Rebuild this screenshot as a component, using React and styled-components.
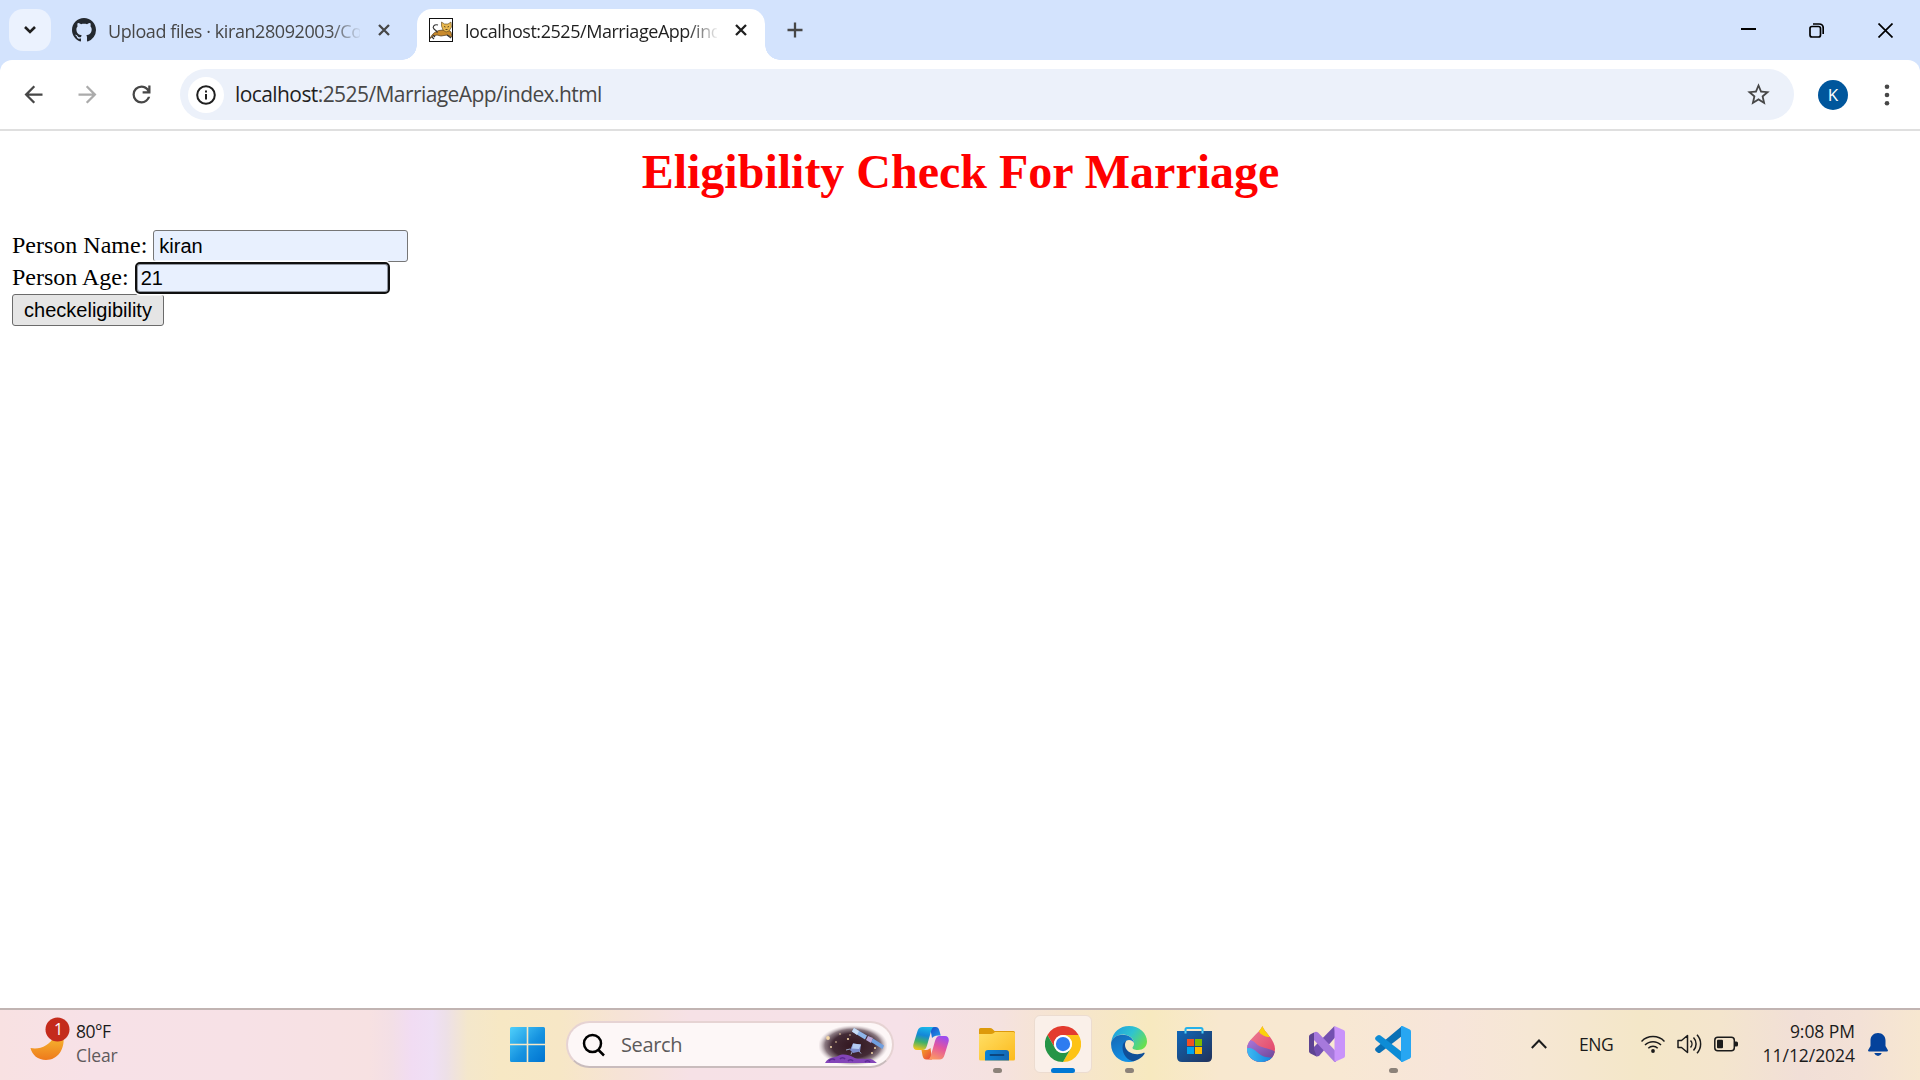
import React from "react";
import styled, { createGlobalStyle, css } from "styled-components";

const ui = '"Open Sans", "Noto Sans", sans-serif';
const serif = '"Liberation Serif", "Times New Roman", serif';
const sans = '"Liberation Sans", Arial, sans-serif';

const GlobalStyle = createGlobalStyle`
  *, *::before, *::after { box-sizing: border-box; }
  html, body { margin: 0; padding: 0; background: #fff; overflow: hidden; }
  svg { display: block; flex: none; }
  button, input { margin: 0; }
`;

const Desktop = styled.div`
  width: 1920px;
  height: 1080px;
  display: flex;
  flex-direction: column;
  background: #fff;
  overflow: hidden;
`;

/* ---------- browser frame ---------- */

const TabStrip = styled.div`
  height: 60px;
  flex: none;
  display: flex;
  align-items: flex-start;
  padding: 9px 0 0 9px;
  background: #d3e3fd;
`;

const IconButton = styled.button`
  width: ${(p) => p.$w || 42}px;
  height: ${(p) => p.$h || 42}px;
  flex: none;
  display: flex;
  align-items: center;
  justify-content: center;
  padding: 0;
  border: 0;
  border-radius: ${(p) => p.$radius || 0}px;
  background: ${(p) => p.$bg || "transparent"};
  color: ${(p) => p.$color || "#1f1f1f"};
`;

const Tab = styled.div`
  position: relative;
  width: 348px;
  height: 51px;
  display: flex;
  align-items: flex-start;
  padding: 9px 15px 0 12px;
  margin-left: ${(p) => p.$ml || 0}px;
  border-radius: 15px 15px 0 0;
  color: ${(p) => (p.$active ? "#1f1f1f" : "#474747")};
  ${(p) =>
    p.$active &&
    css`
      background: #fff;
      &::before,
      &::after {
        content: "";
        position: absolute;
        bottom: 0;
        width: 15px;
        height: 15px;
      }
      &::before {
        left: -15px;
        background: radial-gradient(circle at 0 0, transparent 14.5px, #fff 15px);
      }
      &::after {
        right: -15px;
        background: radial-gradient(circle at 100% 0, transparent 14.5px, #fff 15px);
      }
    `}
`;

const TabTitle = styled.span`
  width: 252px;
  height: 30px;
  margin: -2px 0 0 12px;
  overflow: hidden;
  white-space: nowrap;
  font: 400 18px/30px ${ui};
  letter-spacing: ${(p) => p.$ls}px;
  mask-image: linear-gradient(90deg, #000 222px, transparent 254px);
`;

const TabClose = styled.span`
  margin: 6px 0 0 18px;
`;

const WindowControls = styled.div`
  display: flex;
  margin: -9px 0 0 auto;
`;

const ToolbarBack = styled.div`
  flex: none;
  background: #d3e3fd;
`;

const Toolbar = styled.div`
  height: 71px;
  display: flex;
  align-items: center;
  padding: 0 12px;
  border-bottom: 2px solid #dfdfdf;
  border-radius: 12px 12px 0 0;
  background: #fff;
`;

const Omnibox = styled.div`
  width: 1614px;
  height: 51px;
  flex: none;
  display: flex;
  align-items: center;
  margin-left: 18px;
  padding: 0 22px 0 8px;
  border-radius: 26px;
  background: #ecf1fa;
`;

const SiteInfo = styled.span`
  width: 36px;
  height: 36px;
  display: flex;
  align-items: center;
  justify-content: center;
  border-radius: 50%;
  background: #fff;
`;

const Url = styled.span`
  flex: 1;
  margin: -2px 0 0 11px;
  color: #474747;
  font: 400 21px/30px ${ui};
  letter-spacing: -0.58px;
  white-space: nowrap;
`;

const Host = styled.span`
  color: #1f1f1f;
`;

const Avatar = styled.span`
  width: 30px;
  height: 30px;
  display: flex;
  align-items: center;
  justify-content: center;
  margin: 1px 24px 0;
  border-radius: 50%;
  background: #00569c;
  color: #fff;
  font: 400 17px/30px ${ui};
`;

/* ---------- page ---------- */

const Page = styled.main`
  flex: 1;
  padding: 13px 11px 0 12px;
  background: #fff;
`;

const Title = styled.h1`
  margin: 0 0 31px;
  color: #f00;
  text-align: center;
  font: 700 48px/55px ${serif};
`;

const Field = styled.label`
  height: 32px;
  display: flex;
  align-items: flex-start;
  gap: 6px;
  color: #000;
  font: 400 24px/30px ${serif};
`;

const TextInput = styled.input`
  width: 255px;
  height: 32px;
  padding: 1px ${(p) => (p.$focused ? 4 : 5)}px;
  border: ${(p) => (p.$focused ? "2px solid #101010" : "1px solid #767676")};
  border-radius: ${(p) => (p.$focused ? 5 : 3)}px;
  outline: none;
  background: #e8f0fe;
  box-shadow: ${(p) => (p.$focused ? "inset 0 0 0 1px #9096a0, 0 0 0 1.5px #fff" : "none")};
  color: #000;
  font: 400 20px/26px ${sans};
`;

const SubmitButton = styled.button`
  display: block;
  width: 152px;
  height: 32px;
  padding: 0;
  border: 1px solid #6b6b6b;
  border-radius: 3px;
  background: #e5e5e5;
  color: #000;
  font: 400 20px/28px ${sans};
`;

/* ---------- taskbar ---------- */

const Taskbar = styled.footer`
  height: 72px;
  flex: none;
  display: flex;
  border-top: 2px solid #c1b4b2;
  background: linear-gradient(
    90deg,
    #f8e1e2 0, #f7e1e7 90px, #f7e1e6 240px, #f7e1e2 370px, #f3dfe6 392px,
    #f1dcf3 412px, #efdff5 432px, #ede0e8 446px, #f4e7cb 468px, #f7e8c4 500px,
    #f7e7c6 560px, #f6e3d6 620px, #f6e1e6 690px, #f6e1e8 900px, #f5e2df 1000px,
    #f6e5cd 1070px, #f7e9bf 1150px, #f8e8cf 1220px, #f8e8d3 1340px,
    #f7e5da 1450px, #f6e7d4 1530px, #f4e7c8 1640px, #f4e5cd 1720px,
    #f1dfd7 1800px, #f3e1d6 1860px, #f7e7d0 1920px
  );
`;

const Weather = styled.div`
  width: 510px;
  display: flex;
  padding: 6px 0 0 30px;
`;

const Lines = styled.div`
  display: flex;
  flex-direction: column;
  align-items: ${(p) => p.$align || "flex-start"};
  margin: ${(p) => p.$margin || "0"};
  color: #1b1b1b;
  font: 400 17.5px/24px ${ui};
  letter-spacing: ${(p) => p.$ls}px;
  white-space: nowrap;
`;

const Muted = styled.span`
  color: #5f5a5c;
  letter-spacing: -0.1px;
`;

const StartButton = styled.div`
  margin: 17px 21px 0 0;
`;

const SearchBox = styled.div`
  width: 328px;
  height: 47px;
  flex: none;
  display: flex;
  align-items: center;
  margin-top: 11px;
  padding: 0 5px 0 14px;
  border: 2px solid #e6d3d3;
  border-bottom-color: #c9bcbd;
  border-radius: 24px;
  background: #fdf7f7;
`;

const SearchText = styled.span`
  flex: 1;
  margin-left: 15px;
  color: #5c5a5a;
  font: 400 20px/28px ${ui};
  letter-spacing: -0.35px;
`;

const Apps = styled.div`
  display: flex;
  gap: 8px;
  margin: 5px 0 0 8px;
`;

const AppTile = styled.div`
  width: 58px;
  height: 58px;
  display: flex;
  flex-direction: column;
  align-items: center;
  padding-top: ${(p) => (p.$active ? 10 : 11)}px;
  border: ${(p) => (p.$active ? "1px solid #ecdcd0" : "0")};
  border-radius: 6px;
  background: ${(p) => (p.$active ? "#faf0e9" : "transparent")};
`;

const Running = styled.span`
  width: ${(p) => (p.$active ? 24 : 9)}px;
  height: 5px;
  flex: none;
  margin-top: 6px;
  border-radius: 3px;
  background: ${(p) => (p.$active ? "#0078d4" : "#8c8279")};
`;

const Tray = styled.div`
  display: flex;
  align-items: center;
  margin-left: auto;
  padding: 0 32px 2px 0;
  color: #1b1b1b;
`;

const Language = styled.span`
  width: 62px;
  margin-left: 32px;
  font: 400 17.5px/24px ${ui};
  letter-spacing: -0.5px;
`;

const TrayGroup = styled.div`
  width: 97px;
  display: flex;
  align-items: center;
  justify-content: space-between;
`;

const Clock = styled.div`
  width: 117px;
  display: flex;
  justify-content: flex-end;
  margin: -2px 13px 0 0;
`;

/* ---------- glyphs ---------- */

const Stroke = ({ w, h, d, sw = 2, cap = "butt", join = "miter" }) => (
  <svg width={w} height={h} viewBox={`0 0 ${w} ${h}`} fill="none" stroke="currentColor" strokeWidth={sw} strokeLinecap={cap} strokeLinejoin={join}>
    <path d={d} />
  </svg>
);

const Filled = ({ size, d, box = "0 0 24 24", color = "currentColor" }) => (
  <svg width={size} height={size} viewBox={box} fill={color}>
    <path d={d} />
  </svg>
);

const githubPath =
  "M8 0C3.58 0 0 3.58 0 8c0 3.54 2.29 6.53 5.47 7.59.4.07.55-.17.55-.38 0-.19-.01-.82-.01-1.49-2.01.37-2.53-.49-2.69-.94-.09-.23-.48-.94-.82-1.13-.28-.15-.68-.52-.01-.53.63-.01 1.08.58 1.23.82.72 1.21 1.87.87 2.33.66.07-.52.28-.87.51-1.07-1.78-.2-3.64-.89-3.64-3.95 0-.87.31-1.59.82-2.15-.08-.2-.36-1.02.08-2.12 0 0 .67-.21 2.2.82.64-.18 1.32-.27 2-.27.68 0 1.36.09 2 .27 1.53-1.04 2.2-.82 2.2-.82.44 1.1.16 1.92.08 2.12.51.56.82 1.27.82 2.15 0 3.07-1.87 3.75-3.65 3.95.29.25.54.73.54 1.48 0 1.07-.01 1.93-.01 2.2 0 .21.15.46.55.38A8.013 8.013 0 0016 8c0-4.42-3.58-8-8-8z";
const backPath = "M20 11H7.83l5.59-5.59L12 4l-8 8 8 8 1.41-1.41L7.83 13H20v-2z";
const forwardPath = "M4 11h12.17l-5.59-5.59L12 4l8 8-8 8-1.41-1.41L16.17 13H4v-2z";
const reloadPath =
  "M480-160q-134 0-227-93t-93-227q0-134 93-227t227-93q69 0 132 28.5T720-690v-110h80v280H520v-80h168q-32-56-87.5-88T480-720q-100 0-170 70t-70 170q0 100 70 170t170 70q77 0 139-44t87-116h84q-28 106-114 173t-196 67Z";
const starPath =
  "M22 9.24l-7.19-.62L12 2 9.19 8.63 2 9.24l5.46 4.73L5.82 21 12 17.27 18.18 21l-1.63-7.03L22 9.24zM12 15.4l-3.76 2.27 1-4.28-3.32-2.88 4.38-.38L12 6.1l1.71 4.04 4.38.38-3.32 2.88 1 4.28L12 15.4z";

const TomcatIcon = () => (
  <svg width="24" height="24" viewBox="0 0 24 24">
    <rect x=".5" y=".5" width="23" height="23" fill="#fff" stroke="#111" />
    <path d="M1 20.500C3 16 6 13.500 10 12.500L14 12l4-1 4 3 1 5-5-2-6 1-4-1-4 1z" fill="#c98a2b" stroke="#4b3414" strokeWidth=".7" />
    <path d="M12.500 4l3 2h3.500l3-2 .5 5-2.500 4-3 1-3-2-1.500-4z" fill="#e9b84e" stroke="#5a431b" strokeWidth=".6" />
    <path d="M15 8.500l1.500.5M20 8.500l-1.500.5M16.500 11.500h2" stroke="#3a2a12" strokeWidth=".8" />
    <path d="M9 7C5 6 3 9 5 11s4 2 3 4M4 17l2 2M3 19l2 2M18 17l4 3" fill="none" stroke="#333" strokeWidth="1.100" />
  </svg>
);

const WeatherIcon = () => (
  <svg width="41" height="46" viewBox="0 0 41 46">
    <defs>
      <linearGradient id="moon" x1="0" y1="0" x2="0" y2="1">
        <stop offset="0" stopColor="#f6b730" />
        <stop offset="1" stopColor="#ee7a1c" />
      </linearGradient>
    </defs>
    <path d="M.5 32C9 34 20 30 24 20h9.500C35 33 28 44 16 44 8 44 2 39 .5 32z" fill="url(#moon)" />
    <circle cx="27.500" cy="13.500" r="12" fill="#c42b1c" />
    <text x="28.500" y="19" fill="#fff" fontSize="16" textAnchor="middle" fontFamily="Open Sans, sans-serif">1</text>
  </svg>
);

const StartIcon = () => (
  <svg width="35" height="35" viewBox="0 0 35 35">
    <defs>
      <linearGradient id="start" x1="0" y1="0" x2="35" y2="35" gradientUnits="userSpaceOnUse">
        <stop offset="0" stopColor="#4fd0fb" />
        <stop offset=".55" stopColor="#1592e0" />
        <stop offset="1" stopColor="#0073d0" />
      </linearGradient>
    </defs>
    <path d="M1.500 0H16.700V16.700H0V1.500Q0 0 1.500 0zM18.300 0H33.500Q35 0 35 1.500V16.700H18.300zM0 18.300H16.700V35H1.500Q0 35 0 33.500zM18.300 18.300H35V33.500Q35 35 33.500 35H18.300z" fill="url(#start)" />
  </svg>
);

const SpaceIcon = () => (
  <svg width="68" height="40" viewBox="0 0 68 40">
    <defs>
      <radialGradient id="sky" cx=".5" cy=".5" r=".5">
        <stop offset="0" stopColor="#32161f" />
        <stop offset=".6" stopColor="#432b36" />
        <stop offset=".8" stopColor="#75626b" stopOpacity=".85" />
        <stop offset="1" stopColor="#c8babf" stopOpacity="0" />
      </radialGradient>
    </defs>
    <ellipse cx="34" cy="20.500" rx="35" ry="20.500" fill="url(#sky)" />
    <path d="M6 38C10 31 16 33 19 31c5-3 11-1 15 1 5 3 8 1 12 2 5-1 8 0 12 4z" fill="#8345b8" />
    <path d="M10 36a4 4 0 0 1 6-1M21 34a3 3 0 0 1 5 0M29 36a3 3 0 0 1 5 0M46 37a3 3 0 0 1 5 0" stroke="#5d2a94" fill="none" strokeWidth="1.500" />
    <path d="M35 3l13 7.500-2 4-13-8z" fill="#8fb6ea" />
    <path d="M35 3l5 3-2 4-5-3.500z" fill="#c9def8" />
    <path d="M54 13.500l11 7-1.500 3.500-11.500-7z" fill="#6f9fe0" />
    <path d="M49 11l5 2-2 5-5-3z" fill="#b9a9dc" />
    <path d="M34 18.500l8 1-1 7-7 1.500-3-3z" fill="#7c8ccc" />
    <path d="M34 18.500l8 1-2 4.500-7-.5z" fill="#b5cbf3" />
    <path d="M31 24l-4 1M33 27l-1 2.500M40 26l2 2.500" stroke="#9aa5c8" />
    <g fill="#f6d9a8">
      <circle cx="9" cy="13" r="1.900" /><circle cx="21" cy="9" r=".8" /><circle cx="29" cy="14" r="1.100" />
      <circle cx="17" cy="17" r=".8" /><circle cx="12" cy="22" r="1" /><circle cx="53" cy="28" r="1" />
      <circle cx="56" cy="23" r="1" /><circle cx="31" cy="10" r=".7" />
    </g>
  </svg>
);

const CopilotIcon = () => (
  <svg width="36" height="36" viewBox="0 0 36 36">
    <defs>
      <linearGradient id="cpA" x1=".5" y1="0" x2=".3" y2="1">
        <stop offset="0" stopColor="#19b5e8" />
        <stop offset=".35" stopColor="#1487d8" />
        <stop offset=".65" stopColor="#3fb06a" />
        <stop offset="1" stopColor="#f0c51c" />
      </linearGradient>
      <linearGradient id="cpB" x1=".7" y1="0" x2=".3" y2="1">
        <stop offset="0" stopColor="#9b4df0" />
        <stop offset=".45" stopColor="#e3559f" />
        <stop offset="1" stopColor="#fb9a62" />
      </linearGradient>
      <linearGradient id="cpC" x1="0" y1="0" x2="1" y2="1">
        <stop offset="0" stopColor="#1a46c8" />
        <stop offset="1" stopColor="#1ea0ec" />
      </linearGradient>
      <linearGradient id="cpD" x1="0" y1="0" x2="1" y2="1">
        <stop offset="0" stopColor="#f5a524" />
        <stop offset="1" stopColor="#e8403e" />
      </linearGradient>
    </defs>
    <path d="M17 1h5.500C25 1 25.800 2.500 26.500 5l1.200 4.500C24 9.500 21.500 9.500 19 12z" fill="url(#cpC)" />
    <path d="M19 33.500h-5.500c-2.500 0-3.300-1.500-4-4L8.500 24c3.500 0 6.500.5 9-2z" fill="url(#cpD)" />
    <path d="M9.500 1H22c-2.500 0-3.300 2-4 4.500l-4 14c-.9 3-2 4.500-4.500 4.500H4C.5 24-.3 21 .5 18L4.500 5C5.300 2.500 7 1 9.500 1z" fill="url(#cpA)" />
    <path d="M26.500 33.500H14c2.500 0 3.300-2 4-4.500l4-14c.9-3 2-5 4.500-5H32c3.500 0 4.300 3 3.500 6l-4 13c-.8 3-2.500 4.500-5 4.500z" fill="url(#cpB)" />
  </svg>
);

const FolderIcon = () => (
  <svg width="36" height="36" viewBox="0 0 36 36">
    <defs>
      <linearGradient id="fold" x1="0" y1="0" x2="1" y2="1">
        <stop offset="0" stopColor="#ffdf66" />
        <stop offset="1" stopColor="#fcba1c" />
      </linearGradient>
      <linearGradient id="dock" x1="0" y1="0" x2="1" y2="0">
        <stop offset="0" stopColor="#0c84d8" />
        <stop offset="1" stopColor="#1467b3" />
      </linearGradient>
    </defs>
    <path d="M0 3.500Q0 2 1.500 2H11q1.500 0 2.500 1l2 2H34.500Q36 5 36 6.500V12H0z" fill="#dd9a0b" />
    <path d="M0 8H12q1.500 0 2.500-.8L16 6H34.500Q36 6 36 7.500V33q0 1.500-1.500 1.500H1.500Q0 34.500 0 33z" fill="url(#fold)" />
    <path d="M6 34.500V27q0-3 3-3H27q3 0 3 3v7.500z" fill="url(#dock)" />
    <path d="M11.500 29H24.500" stroke="#0b4680" strokeWidth="1.800" strokeLinecap="round" />
  </svg>
);

const ChromeIcon = () => (
  <svg width="36" height="36" viewBox="0 0 48 48">
    <path d="M3.200 12A24 24 0 0 1 44.800 12L24 12A12 12 0 0 0 13.600 30Z" fill="#e33b2e" />
    <path d="M44.800 12A24 24 0 0 1 24 48L34.400 30A12 12 0 0 0 24 12Z" fill="#fdc316" />
    <path d="M24 48A24 24 0 0 1 3.200 12L13.600 30A12 12 0 0 0 34.400 30Z" fill="#259547" />
    <circle cx="24" cy="24" r="12" fill="#fff" />
    <circle cx="24" cy="24" r="9.500" fill="#2e7cf0" />
  </svg>
);

const EdgeIcon = () => (
  <svg width="36" height="36" viewBox="0 0 36 36">
    <defs>
      <linearGradient id="edA" x1="0" y1=".2" x2="1" y2=".7">
        <stop offset="0" stopColor="#1d9ee0" />
        <stop offset=".5" stopColor="#2fc3d0" />
        <stop offset="1" stopColor="#6be04a" />
      </linearGradient>
      <linearGradient id="edB" x1="0" y1="0" x2=".4" y2="1">
        <stop offset="0" stopColor="#1567b4" />
        <stop offset="1" stopColor="#1390e4" />
      </linearGradient>
    </defs>
    <path d="M.3 16C1.500 6 9 0 18 0c10.500 0 18 7.500 18 15.500 0 5-4 8.500-9 8.500-4 0-5.500-1.200-5.500-2.300 0-1 1.500-1.500 1.500-4.200C23 12 17.500 8.500 12 8.500 6 8.500 2 12 .3 16z" fill="url(#edA)" />
    <path d="M.2 16C2 11.500 6 8.700 11.500 8.700c6 0 11 3.300 11.500 8.300-1-2-2.800-3-5-3-3.500 0-5 3-5 6 0 8 6 13.500 11 14.700C22 35.600 20 36 18 36 7 36-1 27 .2 16z" fill="url(#edB)" />
    <path d="M16 14.200c-3 1.300-4.500 3.700-4.500 7.300 0 7 5 13 11 13.800 5-1 9-4.300 11-7.500.4-.9-.1-1.400-1-1-2 1-4 1.400-6 1.400C19 28.200 14 24 14 19c0-2.200.8-3.800 2-4.800z" fill="#0f4f98" />
  </svg>
);

const StoreIcon = () => (
  <svg width="36" height="36" viewBox="0 0 36 36">
    <defs>
      <linearGradient id="store" x1="0" y1="0" x2="1" y2="1">
        <stop offset="0" stopColor="#0f67b8" />
        <stop offset="1" stopColor="#22325a" />
      </linearGradient>
    </defs>
    <path d="M8.500 7V3.500Q8.500 2 10 2H24q1.500 0 1.500 1.500V7" fill="none" stroke="#25b1ea" strokeWidth="2" />
    <path d="M0 5H35V31q0 5-5 5H5q-5 0-5-5z" fill="url(#store)" />
    <path d="M8.500 5v2.500M25.500 5v2.500" stroke="#4fd0f8" strokeWidth="2" />
    <path d="M10 13h7v7h-7z" fill="#f25022" />
    <path d="M18 13h7v7h-7z" fill="#7fba00" />
    <path d="M10 21h7v7h-7z" fill="#00a4ef" />
    <path d="M18 21h7v7h-7z" fill="#ffb900" />
  </svg>
);

const PaintIcon = () => (
  <svg width="36" height="36" viewBox="0 0 36 36">
    <defs>
      <clipPath id="drop"><path d="M19.500 0C21 6 32 13 32 23c0 8-6 13-14 13S4 30.500 4 23C4 13 15 9 19.500 0z" /></clipPath>
      <linearGradient id="pB" x1="0" y1="0" x2="1" y2="0">
        <stop offset="0" stopColor="#45c4f6" />
        <stop offset="1" stopColor="#1180dc" />
      </linearGradient>
      <linearGradient id="pP" x1="0" y1="0" x2="1" y2="1">
        <stop offset="0" stopColor="#b07be0" />
        <stop offset="1" stopColor="#66418f" />
      </linearGradient>
      <linearGradient id="pR" x1="0" y1="0" x2="1" y2="1">
        <stop offset="0" stopColor="#ee8a9c" />
        <stop offset="1" stopColor="#e0365f" />
      </linearGradient>
    </defs>
    <g clipPath="url(#drop)">
      <path d="M0 0h36v36H0z" fill="url(#pR)" />
      <path d="M16 0h12v11c-4 0-7-.5-10-3-1.800-1.500-2.300-3-2-8z" fill="#fbd30b" />
      <path d="M0 15c5-2 9-1.500 13 2.500 5 5 11 3.500 20 8.500V36H0z" fill="url(#pP)" />
      <path d="M0 24c5-3 9-3 14 2s10 5.500 17 5.500V36H0z" fill="url(#pB)" />
    </g>
  </svg>
);

const VisualStudioIcon = () => (
  <svg width="36" height="36" viewBox="0 0 36 36">
    <path d="M25.500 0L3.500 22.500 5 27l3 3.500 2-.5L26.500 11z" fill="#7350b0" />
    <path d="M0 10.500Q0 9 1.500 8.300L5 6.500v7.500 9.500L8 30.800 1.500 27.500Q0 26.700 0 25.500z" fill="#5d4391" />
    <path d="M5 6.500Q7 5 9 6.500L27 25.500V36h-1.500L5 14z" fill="#a679dc" />
    <path d="M25.500 0L34.500 4Q36 4.700 36 6V30q0 1.300-1.500 2L25.500 36z" fill="#c993fa" />
  </svg>
);

const VsCodeIcon = () => (
  <svg width="36" height="36" viewBox="0 0 36 36">
    <path d="M27 0V10L5.500 26.500Q4 27.500 2.500 26.500L.7 25Q-.5 23.500.7 22z" fill="#0a70b5" />
    <path d="M27 36V26L5.500 9.500Q4 8.500 2.500 9.500L.7 11Q-.5 12.500.7 14z" fill="#0d8cd6" />
    <path d="M26 0H27.500L34.800 3.500Q36 4.200 36 5.500V30.500q0 1.300-1.200 2L27.500 36H26z" fill="#27a6f2" />
  </svg>
);

const WifiIcon = () => (
  <svg width="24" height="20" viewBox="0 0 24 20" fill="none" stroke="#1b1b1b" strokeWidth="1.500">
    <path d="M.5 7.500a16 16 0 0 1 23 0M4 11a11.300 11.300 0 0 1 16 0M7.300 14.200a6.700 6.700 0 0 1 9.400 0" />
    <circle cx="12" cy="17" r="1.900" fill="#1b1b1b" stroke="none" />
  </svg>
);

const VolumeIcon = () => (
  <svg width="25" height="22" viewBox="0 0 25 22" fill="none" stroke="#1b1b1b" strokeWidth="1.500">
    <path d="M1 7.500h3.500L10.500 2.500v17L4.500 14.500H1z" strokeLinejoin="round" />
    <path d="M13.500 7.500a5 5 0 0 1 0 7M16.500 4.500a9.500 9.500 0 0 1 0 13M20 1.800a13.500 13.500 0 0 1 0 18.400" />
  </svg>
);

const BatteryIcon = () => (
  <svg width="24" height="16" viewBox="0 0 24 16">
    <rect x=".8" y="1.300" width="19.500" height="13.500" rx="3" fill="none" stroke="#1b1b1b" strokeWidth="1.500" />
    <rect x="3" y="3.800" width="6" height="8.500" rx="1" fill="#1b1b1b" />
    <path d="M21 5.500h1.500q1.500 0 1.500 1.500v2q0 1.500-1.500 1.500H21z" fill="#1b1b1b" />
  </svg>
);

const BellIcon = () => (
  <svg width="20" height="23" viewBox="0 0 20 23" fill="#04429b">
    <path d="M10 0c4.500 0 7.500 3.300 7.500 7.500V13l2.300 4q.6 1.500-1 1.500H1.200q-1.600 0-1-1.500L2.500 13V7.500C2.500 3.300 5.500 0 10 0z" />
    <path d="M6.200 20h7.600q-1.300 3-3.800 3t-3.800-3z" />
  </svg>
);

/* ---------- composition ---------- */

const crossPath = "M1 1L11 11M11 1L1 11";

const tabs = [
  { title: "Upload files · kiran28092003/Co", ls: -0.42, ml: 9, icon: <Filled size={24} d={githubPath} box="0 0 16 16" color="#24292f" /> },
  { title: "localhost:2525/MarriageApp/ind", ls: -0.45, ml: 9, active: true, icon: <TomcatIcon /> },
];

const apps = [
  { icon: <CopilotIcon /> },
  { icon: <FolderIcon />, running: true },
  { icon: <ChromeIcon />, running: true, active: true },
  { icon: <EdgeIcon />, running: true },
  { icon: <StoreIcon /> },
  { icon: <PaintIcon /> },
  { icon: <VisualStudioIcon /> },
  { icon: <VsCodeIcon />, running: true },
];

export default function App() {
  return (
    <Desktop>
      <GlobalStyle />
      <TabStrip>
        <IconButton $radius={14} $bg="#ebf2fe">
          <Stroke w={14} h={10} d="M2 2L7 7L12 2" sw={2.6} />
        </IconButton>
        {tabs.map((t) => (
          <Tab key={t.title} $active={t.active} $ml={t.ml}>
            {t.icon}
            <TabTitle $ls={t.ls}>{t.title}</TabTitle>
            <TabClose>
              <Stroke w={12} h={12} d={crossPath} sw={2.3} />
            </TabClose>
          </Tab>
        ))}
        <IconButton $w={60} $color="#474747">
          <Stroke w={16} h={16} d="M8 .5V15.500M.5 8H15.500" sw={2.3} />
        </IconButton>
        <WindowControls>
          <IconButton $w={68} $h={60} $color="#000">
            <Stroke w={15} h={16} d="M0 7H15" sw={2} />
          </IconButton>
          <IconButton $w={68} $h={60} $color="#000">
            <Stroke w={15} h={15} d="M3 3.500H9.500Q11.500 3.500 11.500 5.500V12Q11.500 14 9.500 14H3Q1 14 1 12V5.500Q1 3.500 3 3.500zM4 1H10Q14.200 1 14.200 5V11" sw={1.7} />
          </IconButton>
          <IconButton $w={70} $h={60} $color="#000">
            <Stroke w={15} h={15} d="M.5 .5L14.500 14.500M14.500 .5L.5 14.500" sw={1.7} />
          </IconButton>
        </WindowControls>
      </TabStrip>
      <ToolbarBack>
        <Toolbar>
          <IconButton $color="#474747"><Filled size={27} d={backPath} /></IconButton>
          <IconButton $w={66} $color="#ababab"><Filled size={27} d={forwardPath} /></IconButton>
          <IconButton $color="#474747" $w={42}><Filled size={27} d={reloadPath} box="0 -960 960 960" /></IconButton>
          <Omnibox>
            <SiteInfo>
              <svg width="20" height="20" viewBox="0 0 20 20" fill="none" stroke="#1f1f1f" strokeWidth="2">
                <circle cx="10" cy="10" r="8.800" />
                <path d="M10 9V14.500M10 5.500V7.500" />
              </svg>
            </SiteInfo>
            <Url><Host>localhost</Host>:2525/MarriageApp/index.html</Url>
            <Filled size={27} d={starPath} color="#474747" />
          </Omnibox>
          <Avatar>K</Avatar>
          <IconButton $w={30} $color="#474747">
            <svg width="6" height="22" viewBox="0 0 6 22" fill="currentColor">
              <circle cx="3" cy="2.700" r="2.300" /><circle cx="3" cy="11" r="2.300" /><circle cx="3" cy="19.300" r="2.300" />
            </svg>
          </IconButton>
        </Toolbar>
      </ToolbarBack>

      <Page>
        <Title>Eligibility Check For Marriage</Title>
        <Field>Person Name:<TextInput defaultValue="kiran" /></Field>
        <Field>Person Age:<TextInput $focused defaultValue="21" /></Field>
        <SubmitButton>checkeligibility</SubmitButton>
      </Page>

      <Taskbar>
        <Weather>
          <WeatherIcon />
          <Lines $margin="3px 0 0 5px" $ls={-0.5}>
            <span>80°F</span>
            <Muted>Clear</Muted>
          </Lines>
        </Weather>
        <StartButton><StartIcon /></StartButton>
        <SearchBox>
          <Stroke w={24} h={24} d="M19 10.500A8.500 8.500 0 1 1 2 10.500A8.500 8.500 0 0 1 19 10.500M16.500 17L22 22.500" sw={2.5} />
          <SearchText>Search</SearchText>
          <SpaceIcon />
        </SearchBox>
        <Apps>
          {apps.map((a, i) => (
            <AppTile key={i} $active={a.active}>
              {a.icon}
              {a.running && <Running $active={a.active} />}
            </AppTile>
          ))}
        </Apps>
        <Tray>
          <Stroke w={16} h={10} d="M.8 9L8 1.500L15.200 9" sw={2} />
          <Language>ENG</Language>
          <TrayGroup>
            <WifiIcon />
            <VolumeIcon />
            <BatteryIcon />
          </TrayGroup>
          <Clock>
            <Lines $align="flex-end" $ls={-0.05}>
              <span>9:08 PM</span>
              <span>11/12/2024</span>
            </Lines>
          </Clock>
          <BellIcon />
        </Tray>
      </Taskbar>
    </Desktop>
  );
}
